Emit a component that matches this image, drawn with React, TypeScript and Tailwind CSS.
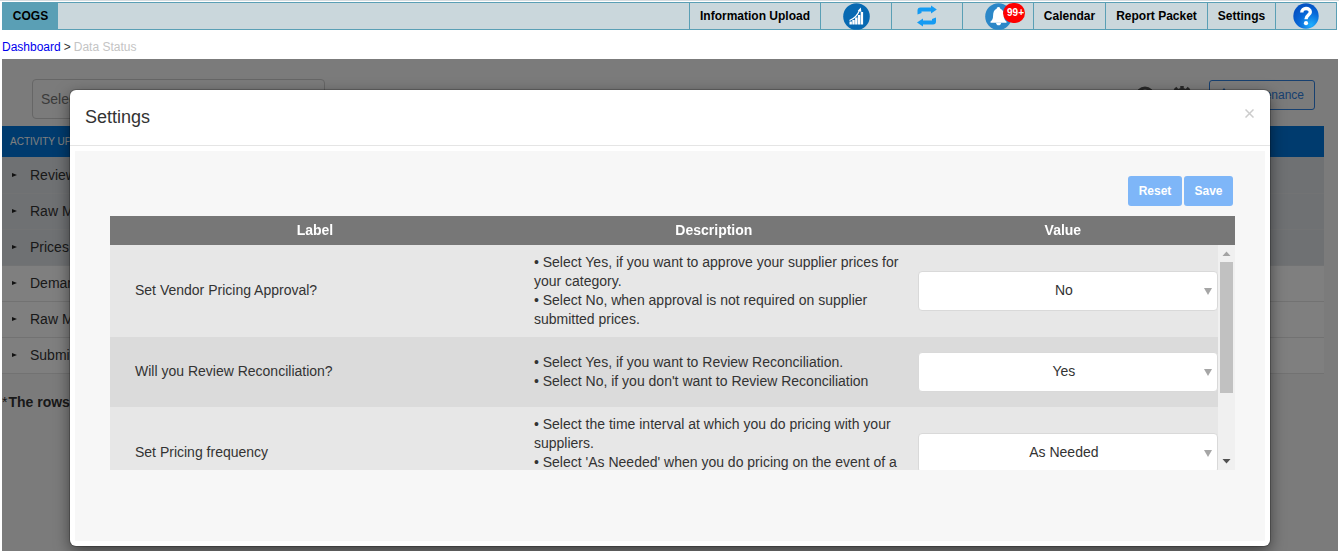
import { useState } from "react";
import type { ReactNode } from "react";

function ChartIcon() {
  return (
    <svg width="27" height="27" viewBox="0 0 27 27" aria-hidden="true">
      <circle cx="13.5" cy="13.5" r="13.3" fill="#0769b2" />
      <g fill="#fff">
        <rect x="6.500" y="18.500" width="2.400" height="3" />
        <rect x="9.300" y="17" width="2.400" height="4.500" />
        <rect x="12.100" y="14.500" width="2.400" height="7" />
        <rect x="14.900" y="12" width="2.400" height="9.500" />
        <rect x="17.700" y="9" width="2.400" height="12.500" />
      </g>
      <path d="M6.500 17.500C11.500 15.500 15 11.500 16.800 6.500" fill="none" stroke="#fff" strokeWidth="1.200" />
      <path d="M14.800 7.800 17.800 4.400 18.400 9Z" fill="#fff" />
    </svg>
  );
}

function RepeatIcon() {
  return (
    <svg width="20" height="22" viewBox="0 0 20 22" aria-hidden="true" fill="#149bf3">
      <path d="M0.500 9.500V5.500Q0.500 2.500 3.500 2.500H14V0.500L19.800 4.500 14 8.500V6.500H4.500V8Z" />
      <path d="M19 12.500V16.500Q19 19.500 16 19.500H6V21.500L0 17.500 6 13.500V15.500H15V14Z" />
    </svg>
  );
}

function BellIcon() {
  return (
    <svg width="27" height="27" viewBox="0 0 27 27" aria-hidden="true">
      <circle cx="13.5" cy="13.5" r="13.3" fill="#2b87c8" />
      <path
        d="M13.500 4C14.700 4 15.300 4.800 15.300 5.800C18 6.700 18.900 9.500 19 12.500C19.100 16 19.700 17 21.500 18.500V19.800H5.500V18.500C7.400 17 8 16 8.100 12.500C8.200 9.500 9 6.700 11.700 5.800C11.700 4.800 12.300 4 13.500 4Z"
        fill="#fff"
      />
      <path d="M11 19.800H16.200C16 23.200 11.200 23.200 11 19.800Z" fill="#fff" />
    </svg>
  );
}

function HelpIcon() {
  return (
    <svg width="26" height="26" viewBox="0 0 26 26" aria-hidden="true">
      <defs>
        <radialGradient id="help" cx="0.7" cy="0.85" r="0.8">
          <stop offset="0" stopColor="#1fb0ff" />
          <stop offset="0.6" stopColor="#0868d8" />
          <stop offset="1" stopColor="#0553c4" />
        </radialGradient>
      </defs>
      <circle cx="13" cy="13" r="12.700" fill="url(#help)" />
      <path
        d="M8.800 9.500C8.600 4.300 17.300 4.300 17.300 9C17.300 12.200 13 12 13 16.300"
        fill="none"
        stroke="#fff"
        strokeWidth="3.400"
      />
      <circle cx="13" cy="20.200" r="2.100" fill="#fff" />
    </svg>
  );
}

function NavCell({ width, label, children }: { width: string; label?: string; children: ReactNode }) {
  return (
    <a
      href="#"
      aria-label={label}
      className={`flex items-center justify-center border-l border-[#5a9fb5] ${width}`}
    >
      {children}
    </a>
  );
}

function NavBar() {
  return (
    <nav className="mr-0.5 ml-0.5 flex h-7 border border-[#5a9fb5] bg-[#cad7dc] text-xs font-bold text-black">
      <a href="#" className="flex w-[55px] items-center justify-center bg-[#5a9fb5]">
        COGS
      </a>
      <div className="ml-auto flex">
        <NavCell width="w-[131px]">Information Upload</NavCell>
        <NavCell width="w-[71px]" label="Reports">
          <ChartIcon />
        </NavCell>
        <NavCell width="w-[71px]" label="Refresh">
          <RepeatIcon />
        </NavCell>
        <NavCell width="w-[71px]" label="Notifications">
          <span className="relative">
            <BellIcon />
            <span className="absolute top-0 left-[18px] flex h-5 w-[22px] items-center justify-center rounded-full bg-[#fe0000] pl-1 text-[10px] text-white">
              99+
            </span>
          </span>
        </NavCell>
        <NavCell width="w-[72px]">Calendar</NavCell>
        <NavCell width="w-[102px]">Report Packet</NavCell>
        <NavCell width="w-[68px]">Settings</NavCell>
        <NavCell width="w-[61px]" label="Help">
          <HelpIcon />
        </NavCell>
      </div>
    </nav>
  );
}

const activities = [
  { name: "Review Reconciliation", done: true },
  { name: "Raw Material Upload", done: true },
  { name: "Prices Upload", done: true },
  { name: "Demand Upload", done: false },
  { name: "Raw Material Mapping", done: false },
  { name: "Submitted Prices", done: false },
];

function StatusPage() {
  return (
    <div className="pt-5">
      <div className="flex h-[47px] items-start pr-[23px] pl-[30px]">
        <input
          aria-label="Select category"
          placeholder="Select Category"
          className="h-10 w-[293px] rounded border border-[#ccc] bg-transparent px-2 text-sm placeholder:text-[#777]"
        />
        <div className="mt-px ml-auto flex items-start">
          <svg width="20" height="20" viewBox="0 0 20 20" className="mt-1.5 mr-[17px]" aria-hidden="true">
            <circle cx="10" cy="10" r="8" fill="none" stroke="#555" strokeWidth="3" />
          </svg>
          <svg width="20" height="20" viewBox="0 0 20 20" className="mt-1.5 mr-[17px]" aria-hidden="true">
            <circle cx="10" cy="10" r="6" fill="none" stroke="#555" strokeWidth="4" />
            <path d="M10 0V20M0 10H20M3 2 17 18M17 2 3 18" stroke="#555" strokeWidth="3.500" />
          </svg>
          <button
            type="button"
            className="flex h-[30px] w-[106px] items-center justify-end rounded-[3px] border border-[#2f80e0] pr-2.5 text-xs text-[#2f80e0]"
          >
            <svg width="10" height="14" viewBox="0 0 10 14" className="mr-1.5" aria-hidden="true">
              <path d="M5 0 9 5H6V14H4V5H1Z" fill="#2f80e0" />
            </svg>
            Maintenance
          </button>
        </div>
      </div>
      <table className="w-[calc(100%-14px)] border-collapse text-left text-sm text-[#333]">
        <thead>
          <tr className="h-[31px] bg-[#0077dc] text-[10px] text-white">
            <th className="pt-0.5 pl-2 font-normal">ACTIVITY UPDATE</th>
          </tr>
        </thead>
        <tbody>
          {activities.map((a) => (
            <tr
              key={a.name}
              className={`h-9 border-b ${a.done ? "border-[#e4e6e9] bg-[#dfe2e6]" : "border-[#e4e4e4] bg-white"}`}
            >
              <td className="pl-2.5">
                <span className="flex items-center">
                  <svg width="5" height="4" viewBox="0 0 5 4" className="mr-[13px]" aria-hidden="true">
                    <path d="M0 0 5 2 0 4Z" fill="#222" />
                  </svg>
                  {a.name}
                </span>
              </td>
            </tr>
          ))}
        </tbody>
      </table>
      <p className="mt-[18px] flex gap-px text-sm font-bold text-[#333]">
        <span className="font-normal">*</span>
        <span>The rows in grey are completed</span>
      </p>
    </div>
  );
}

const settings = [
  {
    id: "approval",
    label: "Set Vendor Pricing Approval?",
    hints: [
      "Select Yes, if you want to approve your supplier prices for your category.",
      "Select No, when approval is not required on supplier submitted prices.",
    ],
    value: "No",
    options: ["Yes", "No"],
  },
  {
    id: "reconciliation",
    label: "Will you Review Reconciliation?",
    hints: [
      "Select Yes, if you want to Review Reconciliation.",
      "Select No, if you don't want to Review Reconciliation",
    ],
    value: "Yes",
    options: ["Yes", "No"],
  },
  {
    id: "frequency",
    label: "Set Pricing frequency",
    hints: [
      "Select the time interval at which you do pricing with your suppliers.",
      "Select 'As Needed' when you do pricing on the event of a price change.",
    ],
    value: "As Needed",
    options: ["As Needed", "Monthly", "Quarterly"],
  },
];

function SettingsTable() {
  const [values, setValues] = useState<Record<string, string>>(
    Object.fromEntries(settings.map((s) => [s.id, s.value])),
  );
  return (
    <div className="flex h-[254px]">
      <div className="flex-1 overflow-y-auto [scrollbar-width:none]">
        <table className="w-full table-fixed border-collapse text-sm leading-[19px] text-[#333]">
          <thead className="sticky top-0 z-10 bg-[#777] text-white">
            <tr className="h-[29px]">
              <th className="w-[37%]">Label</th>
              <th className="w-[35%]">Description</th>
              <th className="w-[28%]">Value</th>
            </tr>
          </thead>
          <tbody>
            {settings.map((s) => (
              <tr key={s.id} className="h-[70px] odd:bg-[#e7e7e7] even:bg-[#dbdbdb]">
                <td className="pb-0.5 pl-[25px]">
                  <label htmlFor={s.id}>{s.label}</label>
                </td>
                <td className="py-2 pr-2 pl-3.5">
                  {s.hints.map((h) => (
                    <p key={h}>{`• ${h}`}</p>
                  ))}
                </td>
                <td className="pl-2.5">
                  <div className="relative">
                    <select
                      id={s.id}
                      value={values[s.id]}
                      onChange={(e) => setValues({ ...values, [s.id]: e.target.value })}
                      className="block h-10 w-full appearance-none rounded border border-[#d9d9d9] bg-white pr-2 pb-0.5 text-center text-sm [text-align-last:center]"
                    >
                      {s.options.map((o) => (
                        <option key={o}>{o}</option>
                      ))}
                    </select>
                    <svg
                      width="8"
                      height="7"
                      viewBox="0 0 8 7"
                      className="pointer-events-none absolute top-[17px] right-1.5"
                      aria-hidden="true"
                    >
                      <path d="M0 0H8L4 7Z" fill="#a6a6a6" />
                    </svg>
                  </div>
                </td>
              </tr>
            ))}
          </tbody>
        </table>
      </div>
      <div className="flex w-[17px] flex-col" aria-hidden="true">
        <div className="h-[29px] bg-[#777]" />
        <div className="flex flex-1 flex-col items-center bg-[#f0f0f0]">
          <svg width="17" height="17" viewBox="0 0 17 17">
            <path d="M4.500 11 8.500 6.500 12.500 11Z" fill="#a3a3a3" />
          </svg>
          <div className="h-[131px] w-[13px] bg-[#c1c1c1]" />
          <svg width="17" height="17" viewBox="0 0 17 17" className="mt-auto">
            <path d="M4.500 6H12.500L8.500 10.500Z" fill="#505050" />
          </svg>
        </div>
      </div>
    </div>
  );
}

function SettingsDialog() {
  return (
    <div
      role="dialog"
      aria-labelledby="dialog-title"
      className="mx-auto w-[90%] max-w-[1200px] rounded-md bg-white shadow-[0_5px_15px_rgba(0,0,0,0.5),0_0_0_1px_rgba(0,0,0,0.2)]"
    >
      <header className="flex h-14 items-center justify-between border-b border-[#e5e5e5] px-[15px] pb-0.5">
        <h2 id="dialog-title" className="text-lg text-[#333]">
          Settings
        </h2>
        <button type="button" aria-label="Close" className="flex h-5 w-3 items-start justify-center pt-0.5">
          <svg width="9" height="9" viewBox="0 0 9 9" aria-hidden="true">
            <path d="M0.500 0.500 8.500 8.500M8.500 0.500 0.500 8.500" stroke="#ccc" strokeWidth="1.500" />
          </svg>
        </button>
      </header>
      <div className="p-[5px]">
        <div className="h-[390px] bg-[#f7f7f7] px-[30px] pt-[25px] pl-[35px]">
          <div className="mb-2.5 flex justify-end gap-0.5 pr-0.5 text-xs font-bold text-white">
            <button type="button" className="h-[30px] w-[54px] rounded-[3px] bg-[#7eb6f8]">
              Reset
            </button>
            <button type="button" className="h-[30px] w-[49px] rounded-[3px] bg-[#7eb6f8]">
              Save
            </button>
          </div>
          <SettingsTable />
        </div>
      </div>
    </div>
  );
}

export default function App() {
  return (
    <div className="flex min-h-screen flex-col bg-white font-['Liberation_Sans',Arial,sans-serif]">
      <div className="h-px bg-[#d5dce0]" />
      <div className="pt-px">
        <NavBar />
      </div>
      <div className="flex h-[29px] items-center pt-1 pl-0.5 text-xs text-[#333]">
        <a href="#" className="text-[#0000ee]">
          Dashboard
        </a>
        <span className="px-[3px]">&gt;</span>
        <span className="text-[#c4c4c4]">Data Status</span>
      </div>
      <main className="relative mr-px ml-0.5 flex-1 overflow-hidden bg-[#f7f7f7]">
        <StatusPage />
        <div className="absolute inset-0 bg-black/50 pt-[31px]">
          <SettingsDialog />
        </div>
      </main>
    </div>
  );
}
